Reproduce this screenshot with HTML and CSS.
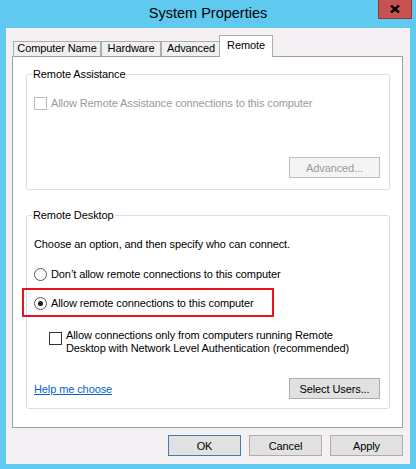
FILE: index.html
```html
<!DOCTYPE html>
<html lang="en">
<head>
    <meta charset="UTF-8">
    <meta name="viewport" content="width=device-width, initial-scale=1.0">
    <title>System Properties</title>
    <link rel="stylesheet" href="styles.css">
</head>
<body>
    <div class="window">
        <div class="titlebar">
            <span class="title">System Properties</span>
            <button class="close" type="button" aria-label="Close">
                <svg width="10" height="8" viewBox="0 0 10 8">
                    <path d="M1 0.5 L9 7.5 M9 0.5 L1 7.5" stroke="#000" stroke-width="2.4" fill="none"/>
                </svg>
            </button>
        </div>
        <div class="client">
            <div class="tabs">
                <div class="tab tab-name">Computer Name</div>
                <div class="tab tab-hw">Hardware</div>
                <div class="tab tab-adv">Advanced</div>
                <div class="tab active">Remote</div>
            </div>
            <div class="panel">
                <div class="group assist">
                    <span class="group-title">Remote Assistance</span>
                    <div class="option disabled">
                        <span class="box"></span>
                        <span>Allow Remote Assistance connections to this computer</span>
                    </div>
                    <div class="group-actions">
                        <button class="btn" type="button" disabled>Advanced...</button>
                    </div>
                </div>
                <div class="group desktop">
                    <span class="group-title">Remote Desktop</span>
                    <p class="intro">Choose an option, and then specify who can connect.</p>
                    <div class="option first">
                        <span class="radio"></span>
                        <span>Don&#8217;t allow remote connections to this computer</span>
                    </div>
                    <div class="highlight">
                        <div class="option">
                            <span class="radio checked"></span>
                            <span>Allow remote connections to this computer</span>
                        </div>
                    </div>
                    <div class="option nla">
                        <span class="box"></span>
                        <span>Allow connections only from computers running Remote<br>Desktop with Network Level Authentication (recommended)</span>
                    </div>
                    <div class="group-actions split">
                        <a class="link" href="#">Help me choose</a>
                        <button class="btn" type="button">Select Users...</button>
                    </div>
                </div>
            </div>
            <div class="footer">
                <button class="btn btn-foot default" type="button">OK</button>
                <button class="btn btn-foot" type="button">Cancel</button>
                <button class="btn btn-foot" type="button">Apply</button>
            </div>
        </div>
    </div>
</body>
</html>
```

FILE: styles.css
```css
body {
    margin: 0;
    background-color: #60c9ef;
    font-family: "Liberation Sans", Arial, sans-serif;
    font-size: 11px;
    letter-spacing: -0.1px;
    color: #000;
}
.window {
    height: 469px;
    display: flex;
    flex-direction: column;
}
.titlebar {
    position: relative;
    height: 28px;
    text-align: center;
}
.title {
    font-size: 14.5px;
    letter-spacing: 0;
    line-height: 26px;
}
.close {
    position: absolute;
    top: 0;
    right: 4px;
    width: 34px;
    height: 19px;
    padding: 0;
    border: 1px solid #8a3a3a;
    border-top: 0;
    background-color: #c75050;
    display: flex;
    align-items: center;
    justify-content: center;
}
.client {
    flex: 1;
    margin: 0 6px 5px;
    padding: 7px 7px 0 6px;
    background-color: #f4f0f4;
}
.tabs {
    display: flex;
    align-items: flex-end;
    height: 22px;
    padding-left: 1px;
    margin-bottom: -1px;
    position: relative;
    z-index: 1;
}
.tab {
    box-sizing: border-box;
    height: 15px;
    margin-bottom: 1px;
    border: 1px solid #acacac;
    border-bottom: 0;
    background-color: #f0f0f0;
    text-align: center;
    line-height: 13px;
}
.tab-name { width: 88px; }
.tab-hw { width: 60px; }
.tab-adv { width: 60px; }
.tab.active {
    width: 54px;
    height: 22px;
    margin: 0 0 0 -2px;
    padding-top: 2px;
    background-color: #fff;
    line-height: 14px;
}
.panel {
    box-sizing: border-box;
    height: 372px;
    padding: 17px 12px 0 13px;
    border: 1px solid #a0a0a0;
    background-color: #fff;
}
.group {
    position: relative;
    box-sizing: border-box;
    display: flex;
    flex-direction: column;
    border: 1px solid #d5dfe5;
    border-radius: 3px;
    padding: 0 9px 0 7px;
}
.group-title {
    position: absolute;
    top: -8px;
    left: 5px;
    padding: 0 1px;
    background-color: #fff;
    line-height: 15px;
}
.assist {
    height: 116px;
    padding-top: 21px;
    padding-bottom: 11px;
}
.desktop {
    height: 194px;
    margin-top: 25px;
    padding-top: 21px;
    padding-bottom: 9px;
}
.intro {
    margin: 0;
    line-height: 15px;
}
.option {
    display: flex;
    align-items: center;
    gap: 4px;
    line-height: 15px;
}
.option.first {
    margin-top: 15px;
}
.option.disabled {
    color: #9a9a9a;
}
.box {
    box-sizing: border-box;
    flex: none;
    width: 13px;
    height: 13px;
    border: 1px solid #333;
    background-color: #fff;
}
.disabled .box {
    border-color: #bcbcbc;
}
.radio {
    box-sizing: border-box;
    flex: none;
    width: 13px;
    height: 13px;
    border: 1px solid #555;
    border-radius: 50%;
    background-color: #fff;
    display: flex;
    align-items: center;
    justify-content: center;
}
.radio.checked::after {
    content: "";
    width: 5px;
    height: 5px;
    border-radius: 50%;
    background-color: #1a1a1a;
}
.highlight {
    box-sizing: border-box;
    width: 252px;
    margin: 6px 0 0 -12px;
    padding: 6px 0 4px 10px;
    border: 2px solid #e8141b;
}
.option.nla {
    align-items: flex-start;
    margin: 12px 0 0 15px;
    line-height: 13px;
}
.nla .box {
    margin-top: 3px;
}
.group-actions {
    margin-top: auto;
    display: flex;
    justify-content: flex-end;
}
.group-actions.split {
    justify-content: space-between;
    align-items: center;
}
.link {
    color: #0066cc;
}
.btn {
    box-sizing: border-box;
    width: 91px;
    height: 21px;
    padding: 0;
    border: 1px solid #adadad;
    background-color: #e1e1e1;
    font-family: inherit;
    font-size: 11px;
    letter-spacing: -0.1px;
    color: #000;
}
.btn:disabled {
    border-color: #bfbfbf;
    background-color: #f4f4f4;
    color: #9a9a9a;
}
.footer {
    display: flex;
    justify-content: flex-end;
    gap: 8px;
    margin-top: 7px;
}
.btn-foot {
    width: 73px;
}
.btn-foot.default {
    border-color: #3c7fb1;
}
```
